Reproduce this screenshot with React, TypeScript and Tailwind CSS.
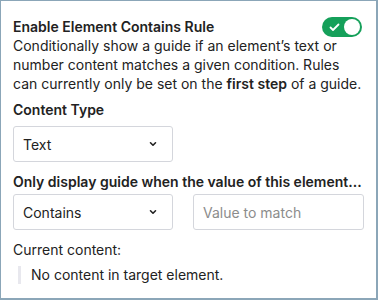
import React from "react";

function Chevron() {
  return (
    <svg width="12" height="12" viewBox="0 0 12 12" fill="none">
      <path d="M3.5 4.75L6 7.25L8.5 4.75" stroke="#222" strokeWidth="1.6" strokeLinecap="round" strokeLinejoin="round" />
    </svg>
  );
}

export default function App() {
  return (
    <div
      className="w-[378px] h-[300px] bg-white border-l border-t border-r-2 border-b-2 border-[#8ba6b8] text-[#222] overflow-hidden"
      style={{ fontFamily: "Inter, 'Noto Sans', sans-serif" }}
    >
      <div className="pl-[12px] pr-[12px] pt-[15px]">
        <div className="flex items-center justify-between">
          <div className="text-[14px] font-semibold leading-[22px]">Enable Element Contains Rule</div>
          <div className="w-[40px] h-[20px] rounded-full bg-[#15a05a] relative flex items-center mr-[2px]">
            <svg className="absolute left-[7px]" width="11" height="9" viewBox="0 0 11 9" fill="none">
              <path d="M1.5 4.5L4 7L9.5 1.5" stroke="white" strokeWidth="1.8" strokeLinecap="round" strokeLinejoin="round" />
            </svg>
            <div className="absolute right-[2px] w-[16px] h-[16px] rounded-full bg-white" />
          </div>
        </div>
        <p className="text-[14px] leading-[19px] mt-[-2px]">
          Conditionally show a guide if an element’s text or number content matches a given condition. Rules can currently only be set on the <b className="font-semibold">first step</b> of a guide.
        </p>
        <div className="text-[14px] font-semibold leading-[22px] mt-[6px]">Content Type</div>
        <div className="mt-[5px] w-[160px] h-[36px] border border-[#d4d6dc] rounded-[3px] flex items-center justify-between pl-[9px] pr-[13px] text-[14px]">
          <span>Text</span>
          <Chevron />
        </div>
        <div className="text-[14px] font-semibold leading-[22px] mt-[9px]">Only display guide when the value of this element...</div>
        <div className="flex gap-[20px] mt-[1px]">
          <div className="w-[160px] h-[36px] border border-[#d4d6dc] rounded-[3px] flex items-center justify-between pl-[9px] pr-[13px] text-[14px]">
            <span>Contains</span>
            <Chevron />
          </div>
          <div className="w-[171px] h-[36px] border border-[#d4d6dc] rounded-[3px] flex items-center pl-[9px] text-[14px] text-[#8c8c8c]">
            Value to match
          </div>
        </div>
        <div className="text-[14px] leading-[20px] mt-[10px]">Current content:</div>
        <div className="mt-[6px] ml-[5px] border-l-[3px] border-[#e8e8ee] pl-[10px] text-[14px] leading-[18px]">
          No content in target element.
        </div>
      </div>
    </div>
  );
}
